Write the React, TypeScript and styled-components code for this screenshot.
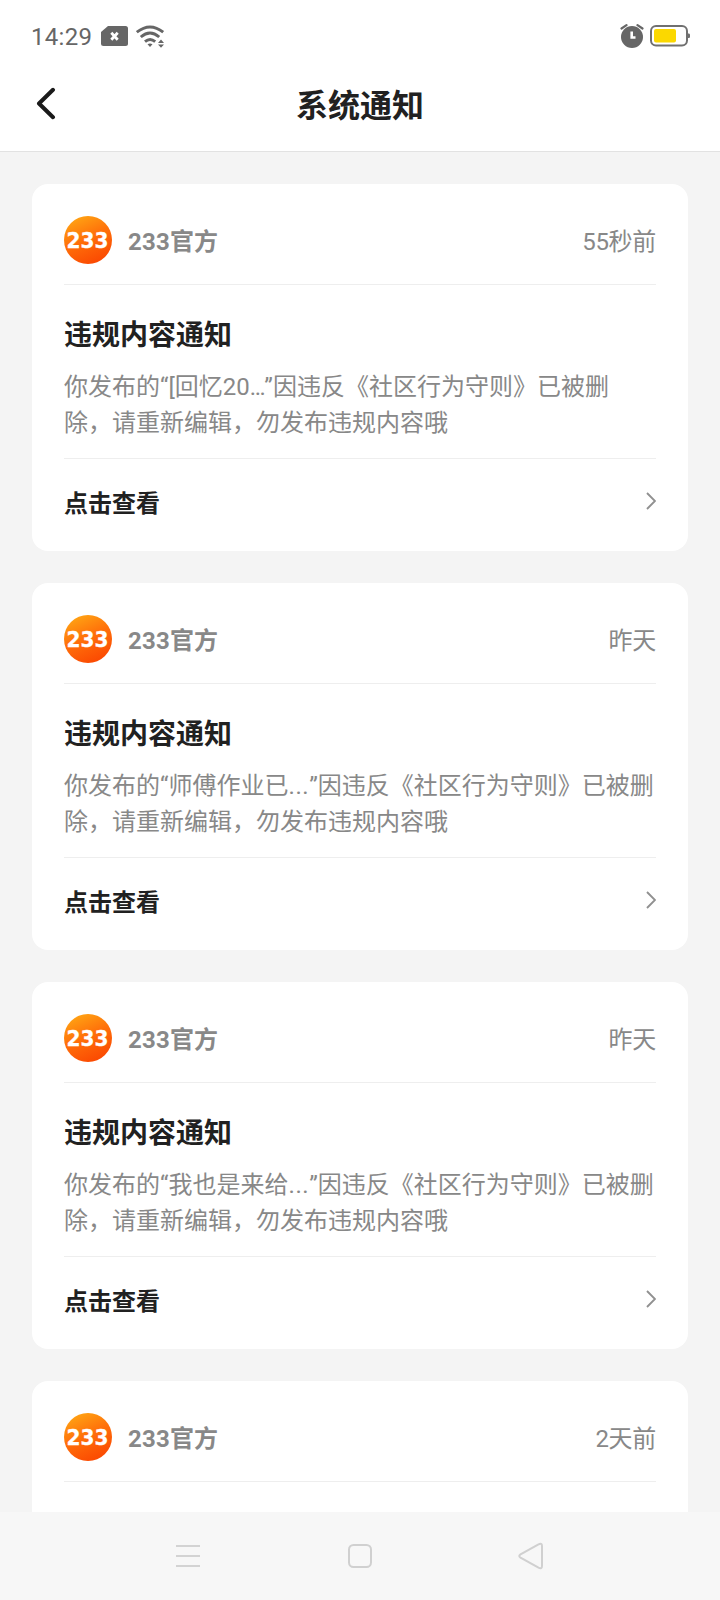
import React from "react";
import styled, { createGlobalStyle } from "styled-components";

const GlobalStyle = createGlobalStyle`
  * { box-sizing: border-box; }
  body {
    margin: 0;
    background: #f4f4f4;
    font-family: Roboto, "Noto Sans CJK SC", sans-serif;
  }
  svg { display: block; flex: none; }
  h1, h2, p { margin: 0; }
`;

const Screen = styled.div`
  width: 720px;
  height: 1600px;
  display: flex;
  flex-direction: column;
  overflow: hidden;
  background: #f4f4f4;
`;

const Header = styled.header`
  flex: none;
  height: 152px;
  background: #fff;
  border-bottom: 1px solid #e2e2e2;
`;

const StatusBar = styled.div`
  height: 72px;
  padding: 0 30px 0 30px;
  display: flex;
  justify-content: space-between;
  align-items: center;
`;

const StatusGroup = styled.div<{ $gap: number }>`
  display: flex;
  align-items: center;
  gap: ${(p) => p.$gap}px;
`;

const Clock = styled.span`
  width: 63px;
  font-size: 24px;
  line-height: 28px;
  letter-spacing: 0.3px;
  color: #666;
  padding: 2px 0 0 1px;
`;

const TitleBar = styled.div`
  height: 79px;
  padding: 0 36px;
  display: grid;
  grid-template-columns: 1fr auto 1fr;
  align-items: center;
`;

const BackButton = styled.button`
  width: 20px;
  height: 34px;
  padding: 0;
  margin-top: -16px;
  border: 0;
  background: none;
`;

const PageTitle = styled.h1`
  font-size: 32px;
  line-height: 48px;
  font-weight: 700;
  color: #212121;
  margin-top: -12px;
`;

const Feed = styled.main`
  flex: 1;
  min-height: 0;
  overflow: hidden;
  padding: 32px 32px 0;
  display: flex;
  flex-direction: column;
  gap: 32px;
`;

const Card = styled.article`
  flex: none;
  height: 367px;
  padding: 0 32px;
  border-radius: 16px;
  background: #fff;
`;

const CardHead = styled.div`
  height: 101px;
  padding-top: 12px;
  display: flex;
  align-items: center;
  border-bottom: 1px solid #eee;
`;

const Sender = styled.span`
  flex: 1;
  margin: 3px 0 0 16px;
  font-size: 24px;
  line-height: 36px;
  font-weight: 700;
  letter-spacing: 0.2px;
  color: #888;
`;

const Time = styled.time`
  margin-top: 3px;
  font-size: 24px;
  line-height: 36px;
  letter-spacing: -0.3px;
  color: #888;
`;

const CardBody = styled.div`
  height: 174px;
  padding-top: 30px;
  border-bottom: 1px solid #eee;
`;

const CardTitle = styled.h2`
  font-size: 28px;
  line-height: 42px;
  font-weight: 700;
  color: #212121;
`;

const Message = styled.p`
  margin-top: 12px;
  font-size: 24px;
  line-height: 36px;
  color: #888;
  white-space: nowrap;
`;

const Dots = styled.span<{ $tight?: boolean }>`
  letter-spacing: ${(p) => (p.$tight ? "-1.5px" : "0.6px")};
`;

const CardAction = styled.div`
  height: 90px;
  display: flex;
  align-items: center;
  justify-content: space-between;
  font-size: 24px;
  line-height: 36px;
  font-weight: 700;
  color: #212121;
`;

const ChevronIcon = styled.svg`
  margin-bottom: 6px;
`;

const NavBar = styled.nav`
  flex: none;
  height: 88px;
  padding: 0 176px 0 175px;
  display: flex;
  align-items: center;
  justify-content: space-between;
  background: #f7f7f7;
`;

const Logo = () => (
  <svg width="48" height="48" viewBox="0 0 48 48">
    <defs>
      <linearGradient id="brand" x1="0.15" y1="0" x2="0.6" y2="1">
        <stop offset="0" stopColor="#ffa914" />
        <stop offset="0.5" stopColor="#ff700a" />
        <stop offset="1" stopColor="#fb4a02" />
      </linearGradient>
    </defs>
    <circle cx="24" cy="24" r="24" fill="url(#brand)" />
    <text
      x="2.500"
      y="31.500"
      fontFamily="'DejaVu Sans', sans-serif"
      fontWeight="700"
      fontSize="20.500"
      textLength="42"
      lengthAdjust="spacingAndGlyphs"
      fill="#fff"
      stroke="#fff"
      strokeWidth="0.300"
    >
      233
    </text>
  </svg>
);

const SimIcon = () => (
  <svg width="27" height="20" viewBox="0 0 27 20">
    <path d="M7 0H24.500Q27 0 27 2.500V17.500Q27 20 24.500 20H2.500Q0 20 0 17.500V6Z" fill="#666" />
    <path d="M10.300 6.800L16.700 13.700M16.700 6.800L10.300 13.700" stroke="#fff" strokeWidth="2.800" />
  </svg>
);

const WifiIcon = () => (
  <svg width="29" height="23" viewBox="0 0 29 23" fill="none" stroke="#666" strokeWidth="2.900">
    <path d="M0.800 7.200Q14 -3.400 27.200 7.200" />
    <path d="M4.800 12Q14 4 23.200 12" />
    <path d="M9 16.700Q14 12.300 19.200 16.700" />
    <path d="M11.500 19.300Q14 17.700 16.500 19.300L14 22Z" fill="#666" stroke="none" />
    <path d="M22 18L25 14.500L28 18ZM22 19.500H28L25 22.800Z" fill="#666" stroke="none" />
  </svg>
);

const AlarmIcon = () => (
  <svg width="24" height="24" viewBox="0 0 24 24" fill="none">
    <circle cx="12" cy="13" r="11" fill="#666" />
    <path d="M1.500 4.500L6.500 1.200M17.500 1.200L22.500 4.500" stroke="#666" strokeWidth="2.200" strokeLinecap="round" />
    <path d="M11.700 7.500V13.500H15.500" stroke="#fff" strokeWidth="2.600" />
  </svg>
);

const BatteryIcon = () => (
  <svg width="40" height="22" viewBox="0 0 40 22">
    <rect x="1" y="1" width="36" height="19.500" rx="5" fill="none" stroke="#707070" strokeWidth="2" />
    <rect x="4" y="4" width="22" height="13.500" rx="2" fill="#fbd800" />
    <path d="M38 8.500H39Q40 8.500 40 10V11.500Q40 13 39 13H38Z" fill="#707070" />
  </svg>
);

const Chevron = () => (
  <ChevronIcon width="12" height="18" viewBox="0 0 12 18" fill="none">
    <path d="M3 1L11 9L3 17" stroke="#909090" strokeWidth="1.900" />
  </ChevronIcon>
);

type Notice = { time: string; subject?: string; tightDots?: boolean };

const notices: Notice[] = [
  { time: "55秒前", subject: "[回忆20", tightDots: true },
  { time: "昨天", subject: "师傅作业已" },
  { time: "昨天", subject: "我也是来给" },
  { time: "2天前" },
];

const NoticeCard = ({ time, subject, tightDots }: Notice) => (
  <Card>
    <CardHead>
      <Logo />
      <Sender>233官方</Sender>
      <Time>{time}</Time>
    </CardHead>
    {subject && (
      <>
        <CardBody>
          <CardTitle>违规内容通知</CardTitle>
          <Message>
            你发布的“{subject}
            <Dots $tight={tightDots}>...</Dots>”因违反《社区行为守则》已被删
            <br />
            除，请重新编辑，勿发布违规内容哦
          </Message>
        </CardBody>
        <CardAction>
          点击查看
          <Chevron />
        </CardAction>
      </>
    )}
  </Card>
);

export default function App() {
  return (
    <Screen>
      <GlobalStyle />
      <Header>
        <StatusBar>
          <StatusGroup $gap={8}>
            <Clock>14:29</Clock>
            <SimIcon />
            <WifiIcon />
          </StatusGroup>
          <StatusGroup $gap={6}>
            <AlarmIcon />
            <BatteryIcon />
          </StatusGroup>
        </StatusBar>
        <TitleBar>
          <BackButton aria-label="返回">
            <svg width="20" height="34" viewBox="0 0 20 34" fill="none">
              <path
                d="M17 2.800L3 16.500L17 30.200"
                stroke="#1a1a1a"
                strokeWidth="4"
                strokeLinecap="round"
                strokeLinejoin="round"
              />
            </svg>
          </BackButton>
          <PageTitle>系统通知</PageTitle>
        </TitleBar>
      </Header>
      <Feed>
        {notices.map((n, i) => (
          <NoticeCard key={i} {...n} />
        ))}
      </Feed>
      <NavBar>
        <svg width="26" height="26" viewBox="0 0 26 26" stroke="#d3d3d3" strokeWidth="2">
          <path d="M1 3H25M1 13H25M1 23H25" />
        </svg>
        <svg width="26" height="26" viewBox="0 0 26 26" fill="none">
          <rect x="2" y="2" width="22" height="22" rx="4.500" stroke="#d0d0d0" strokeWidth="2" />
        </svg>
        <svg width="26" height="28" viewBox="0 0 26 28" fill="none">
          <path
            d="M20.500 2.300Q24 0.500 24 4V24Q24 27.500 20.500 25.700L2.500 15.700Q0 14 2.500 12.300Z"
            stroke="#d0d0d0"
            strokeWidth="2"
          />
        </svg>
      </NavBar>
    </Screen>
  );
}
